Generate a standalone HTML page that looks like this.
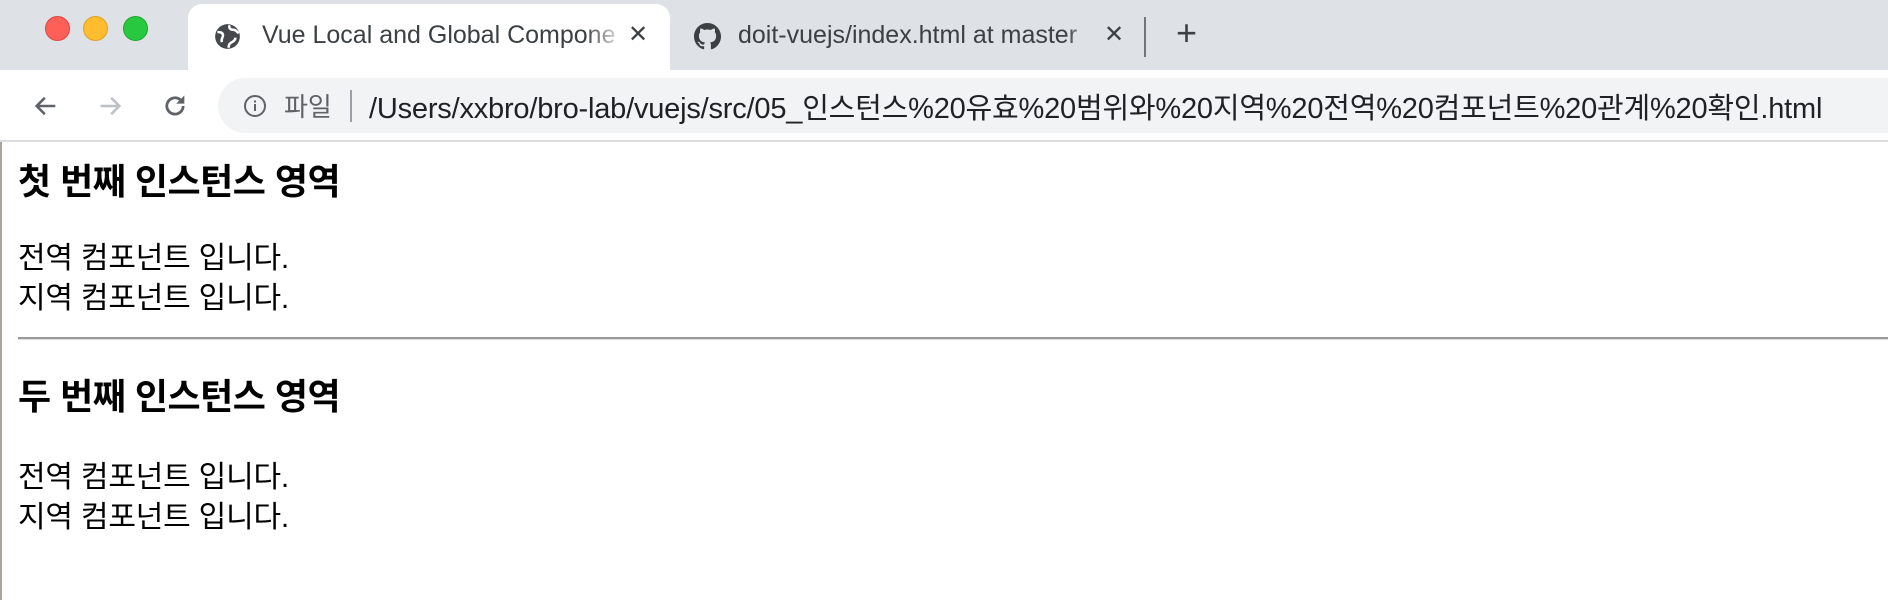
<!DOCTYPE html>
<html><head><meta charset="utf-8"><style>
*{margin:0;padding:0;box-sizing:border-box}
body{width:1888px;height:600px;overflow:hidden;background:#fff;font-family:"Liberation Sans","Noto Sans CJK KR",sans-serif;position:relative}
.tabbar{position:absolute;left:0;top:0;width:1888px;height:70px;background:#dee1e6}
.light{position:absolute;top:16px;width:25px;height:25px;border-radius:50%}
.tab{position:absolute;left:188px;top:4px;width:482px;height:66px;background:#fff;border-radius:14px 14px 0 0}
.t{position:absolute;font-size:25px;color:#3c4043;white-space:nowrap;top:21px}
.toolbar{position:absolute;left:0;top:70px;width:1888px;height:72px;background:#fff;border-bottom:2px solid #dadce0}
.pill{position:absolute;left:218px;top:8px;width:1700px;height:55px;background:#f1f3f4;border-radius:28px}
.content{position:absolute;left:18px;top:142px;width:1870px}
h3{font-size:36px;font-weight:bold;letter-spacing:-0.5px;line-height:40px;position:absolute;left:0;white-space:nowrap}
p{font-size:30px;letter-spacing:-0.2px;line-height:40px;position:absolute;left:0;white-space:nowrap}
.hr{position:absolute;left:0;top:195px;width:1870px;height:3px;background:#9a9a9a;border-bottom:1px solid #ddd}
</style></head><body>
<div style="position:absolute;left:0;top:142px;width:2px;height:458px;background:#a8a39c"></div>
<div class="tabbar">
<div class="light" style="left:45px;background:#fe5f57;border:1px solid #e0443e"></div>
<div class="light" style="left:83px;background:#febc2e;border:1px solid #dea123"></div>
<div class="light" style="left:123px;background:#28c840;border:1px solid #1aab29"></div>
<div class="tab"></div>
<svg style="position:absolute;left:214px;top:23px" width="27" height="27" viewBox="0 0 24 24"><circle cx="12" cy="12" r="11" fill="#45484c"/><path d="M3 8c3 0 5 1 5 3s-2 3-1 6M14 2c-1 2 0 4 3 4s3 2 5 3M13 22c0-3 1-4 3-5s3-2 3-4" stroke="#fff" stroke-width="2.2" fill="none"/></svg>
<div class="t" style="left:262px">Vue Local and Global Compone</div>
<div style="position:absolute;left:585px;top:14px;width:40px;height:50px;background:linear-gradient(90deg,rgba(255,255,255,0),#fff)"></div>
<div class="t" style="left:628px;font-size:24px;top:20px">✕</div>
<svg style="position:absolute;left:694px;top:23px" width="27" height="27" viewBox="0 0 16 16"><path fill="#3c4043" d="M8 0C3.58 0 0 3.580 0 8c0 3.54 2.290 6.530 5.470 7.590.4.07.55-.17.55-.38 0-.19-.01-.82-.01-1.49-2.01.37-2.530-.49-2.690-.94-.09-.23-.48-.94-.82-1.13-.28-.15-.68-.52-.01-.53.63-.01 1.08.58 1.23.82.72 1.21 1.87.87 2.33.66.07-.52.28-.87.51-1.07-1.78-.2-3.64-.89-3.64-3.95 0-.87.31-1.59.82-2.15-.08-.2-.36-1.02.08-2.12 0 0 .67-.21 2.2.82.64-.18 1.32-.27 2-.27.68 0 1.36.09 2 .27 1.53-1.04 2.2-.82 2.2-.82.44 1.1.16 1.92.08 2.12.51.56.82 1.27.82 2.15 0 3.07-1.87 3.75-3.65 3.95.29.25.54.73.54 1.48 0 1.07-.01 1.93-.01 2.2 0 .21.15.46.55.38A8.013 8.013 0 0016 8c0-4.42-3.58-8-8-8z"/></svg>
<div class="t" style="left:738px">doit-vuejs/index.html at master</div>
<div style="position:absolute;left:1065px;top:14px;width:40px;height:50px;background:linear-gradient(90deg,rgba(222,225,230,0),#dee1e6)"></div>
<div style="position:absolute;left:1100px;top:14px;width:40px;height:50px;background:#dee1e6"></div>
<div class="t" style="left:1104px;font-size:24px;top:20px">✕</div>
<div style="position:absolute;left:1144px;top:17px;width:2px;height:40px;background:#70757a"></div>
<div class="t" style="left:1176px;font-size:36px;top:12px;color:#3c4043">+</div>
</div>
<div class="toolbar">
<svg style="position:absolute;left:32px;top:22px" width="28" height="28" viewBox="0 0 24 24"><path d="M20 12H5M11 5l-7 7 7 7" stroke="#5f6368" stroke-width="2.2" fill="none"/></svg>
<svg style="position:absolute;left:96px;top:22px" width="28" height="28" viewBox="0 0 24 24"><path d="M4 12h15M13 5l7 7-7 7" stroke="#bdc1c6" stroke-width="2.2" fill="none"/></svg>
<svg style="position:absolute;left:161px;top:22px" width="28" height="28" viewBox="0 0 24 24"><path d="M19 12a7 7 0 1 1-2.5-5.4" stroke="#5f6368" stroke-width="2.4" fill="none"/><path d="M20 3v7h-7z" fill="#5f6368"/></svg>
<div class="pill"></div>
<svg style="position:absolute;left:243px;top:24px" width="24" height="24" viewBox="0 0 24 24"><circle cx="12" cy="12" r="10" stroke="#5f6368" stroke-width="2" fill="none"/><rect x="11" y="10" width="2" height="7" fill="#5f6368"/><rect x="11" y="6.5" width="2" height="2" fill="#5f6368"/></svg>
<div style="position:absolute;left:284px;top:17px;font-size:26px;color:#5f6368">파일</div>
<div style="position:absolute;left:350px;top:20px;width:2px;height:32px;background:#9aa0a6"></div>
<div style="position:absolute;left:369px;top:15px;font-size:29px;color:#202124;white-space:nowrap;letter-spacing:-0.2px">/Users/xxbro/bro-lab/vuejs/src/05_인스턴스%20유효%20범위와%20지역%20전역%20컴포넌트%20관계%20확인.html</div>
</div>
<div class="content">
<h3 style="top:20px">첫 번째 인스턴스 영역</h3>
<p style="top:97px">전역 컴포넌트 입니다.</p>
<p style="top:137px">지역 컴포넌트 입니다.</p>
<div class="hr"></div>
<h3 style="top:235px">두 번째 인스턴스 영역</h3>
<p style="top:316px">전역 컴포넌트 입니다.</p>
<p style="top:356px">지역 컴포넌트 입니다.</p>
</div>
</body></html>
